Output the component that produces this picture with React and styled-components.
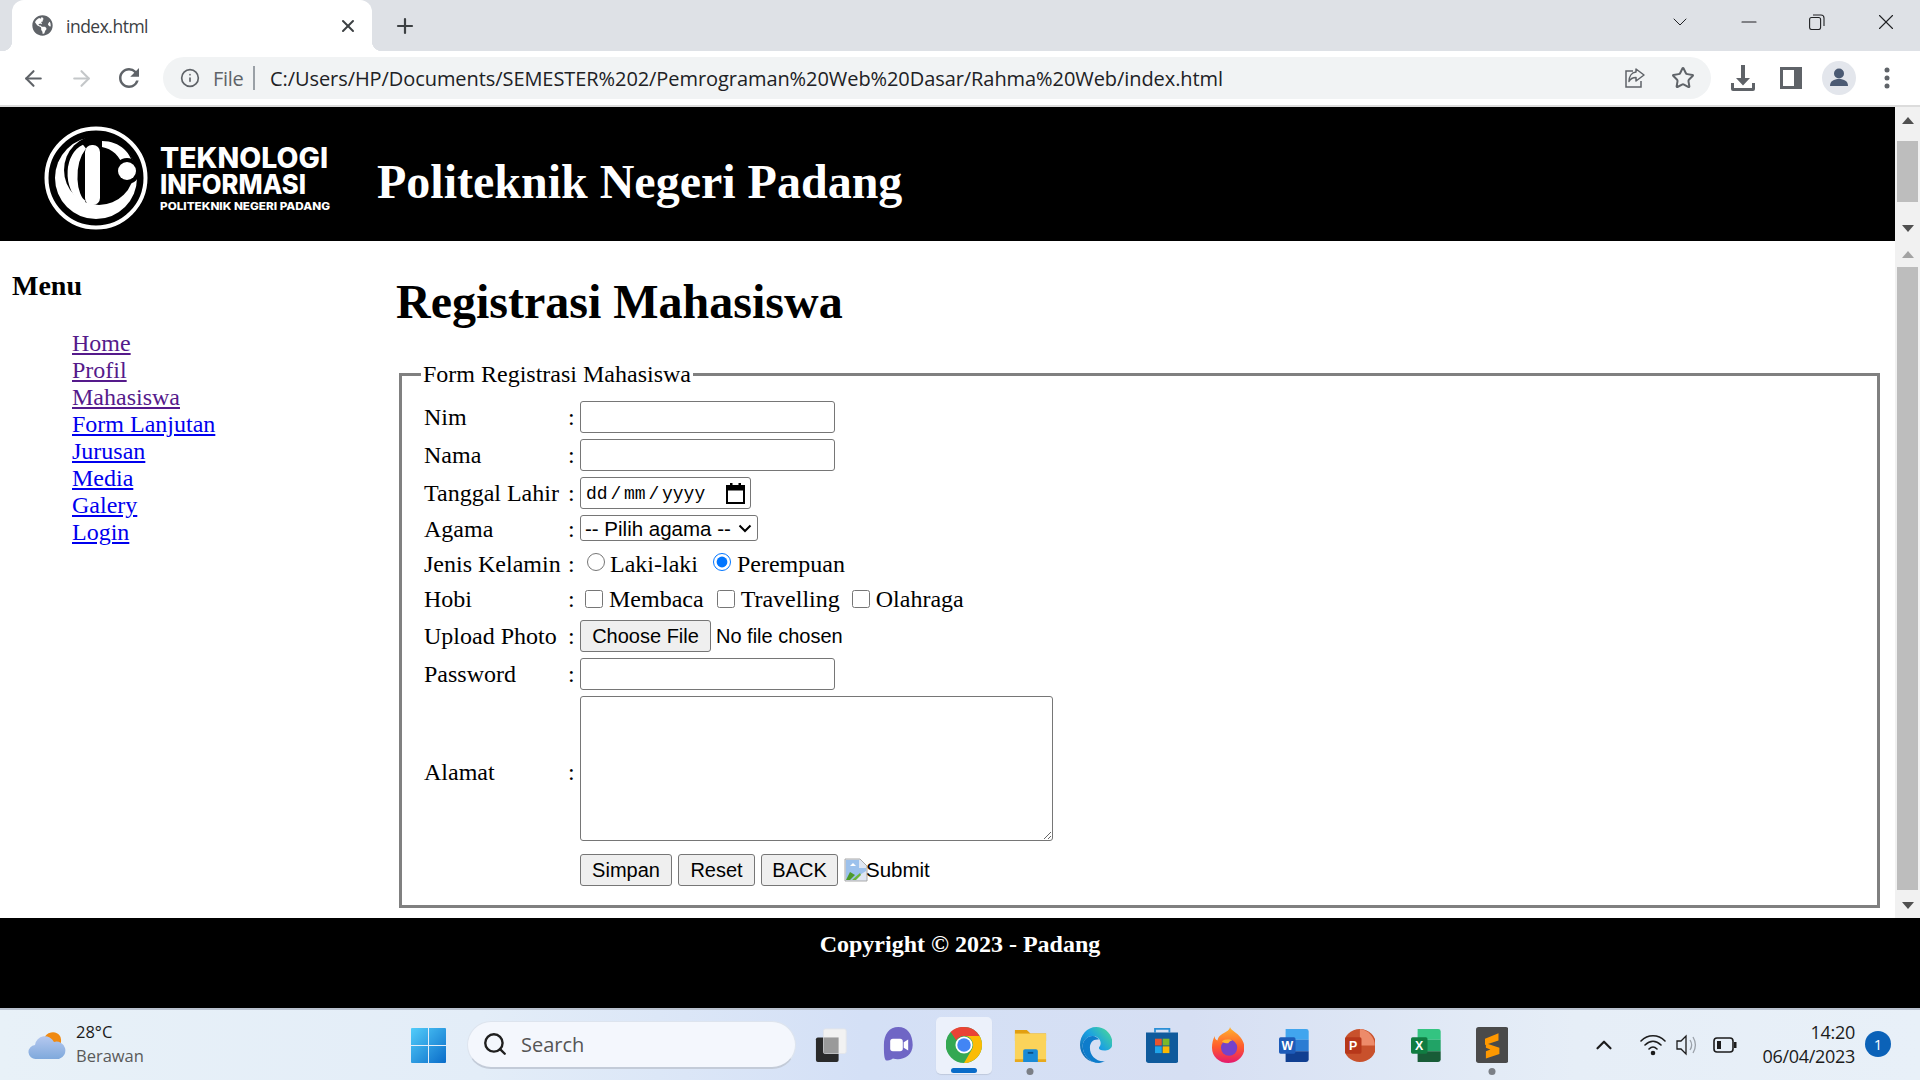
import React from 'react';
import styled, { createGlobalStyle } from 'styled-components';
import { ArrowLeft, ArrowRight, Info, Star, X, Plus, ChevronDown, ChevronUp, Minus, Search } from 'lucide-react';
import { FaGlobeAmericas } from 'react-icons/fa';
import { MdRefresh } from 'react-icons/md';

const Global = createGlobalStyle`
  html, body { margin: 0; padding: 0; width: 1920px; height: 1080px; overflow: hidden; background: #fff; }
  * { box-sizing: border-box; }
`;
const UI = `"Open Sans", "Noto Sans", sans-serif`;
const SERIF = `"Liberation Serif", "Times New Roman", serif`;
const SANS = `"Liberation Sans", Arial, sans-serif`;
const MONO = `"Liberation Mono", "Courier New", monospace`;
const CHEVRON = `url("data:image/svg+xml,%3Csvg xmlns='http://www.w3.org/2000/svg' width='14' height='9' viewBox='0 0 14 9'%3E%3Cpath d='M1.500 1.500L7 7l5.500-5.500' fill='none' stroke='%23000' stroke-width='2'/%3E%3C/svg%3E")`;

const Screen = styled.div`width:1920px;height:1080px;display:flex;flex-direction:column;overflow:hidden;font-family:${SERIF};`;
const TabStrip = styled.div`height:51px;background:#dee1e6;display:flex;align-items:center;padding-left:12px;flex:none;`;
const Tab = styled.div`
  position:relative;width:360px;height:51px;background:#fff;border-radius:12px 12px 0 0;display:flex;align-items:center;padding:0 14px 0 20px;color:#3c4043;
  font:17.5px ${UI};letter-spacing:-.5px;
  &::before,&::after{content:"";position:absolute;bottom:0;width:10px;height:10px;}
  &::before{left:-10px;background:radial-gradient(circle at 0 0,#dee1e6 10px,#fff 10.5px);}
  &::after{right:-10px;background:radial-gradient(circle at 100% 0,#dee1e6 10px,#fff 10.5px);}
`;
const TabTitle = styled.span`margin-left:13px;flex:1;`;
const NewTab = styled.div`margin-left:21px;display:flex;color:#3c4043;`;
const WindowControls = styled.div`margin-left:auto;display:flex;height:100%;`;
const WinBtn = styled.div`width:68.5px;display:flex;align-items:center;justify-content:center;padding-bottom:8px;color:#202124;`;
const Toolbar = styled.div`height:56px;background:#fff;border-bottom:2px solid #dcdcdc;display:flex;align-items:center;padding:0 9px;flex:none;`;
const ToolBtn = styled.div`width:48px;height:42px;display:flex;align-items:center;justify-content:center;color:${p=>p.$dim?'#c4c7c9':'#5f6368'};flex:none;`;
const Omnibox = styled.div`margin:0 8px 0 10px;width:1548px;height:42px;border-radius:21px;background:#f1f3f4;display:flex;align-items:center;padding:0 16px 0 17px;color:#5f6368;flex:none;`;
const Scheme = styled.span`font:20px ${UI};margin-left:13px;color:#5f6368;letter-spacing:-.3px;`;
const OmniSep = styled.span`width:1.5px;height:24px;background:#9aa0a6;margin:0 15px 0 10px;`;
const Url = styled.span`font:20px ${UI};color:#202124;letter-spacing:-.07px;white-space:nowrap;`;
const OmniEnd = styled.div`margin-left:auto;display:flex;gap:24px;align-items:center;`;

const Page = styled.div`flex:1;display:flex;flex-direction:column;min-height:0;`;
const HeaderFrame = styled.div`height:134px;display:flex;flex:none;`;
const Banner = styled.header`flex:1;background:#000;display:flex;align-items:center;color:#fff;`;
const LogoBox = styled.svg`width:340px;height:134px;flex:none;`;
const BannerTitle = styled.h1`margin:14px 0 0 37px;font:bold 48px ${SERIF};`;
const Scrollbar = styled.div`width:25px;flex:none;background:#f1f1f1;display:flex;flex-direction:column;align-items:center;`;
const Arrow = styled.div`
  height:26px;flex:none;display:flex;align-items:center;justify-content:center;
  &::after{content:"";border-left:6px solid transparent;border-right:6px solid transparent;
    ${p=>p.$down?'border-top':'border-bottom'}:7px solid ${p=>p.$dim?'#a3a3a3':'#505050'};}
`;
const ScrollTrack = styled.div`flex:1;width:100%;display:flex;flex-direction:column;padding:${p=>p.$pad};`;
const Thumb = styled.div`height:${p=>p.$h}px;margin:0 2px;background:${p=>p.$c||'#bdbdbd'};`;
const MiddleFrame = styled.div`height:677px;display:flex;flex:none;`;
const Sidebar = styled.nav`width:385px;flex:none;padding:29px 12px 0;`;
const MenuTitle = styled.h3`margin:0 0 28px;font:bold 28px ${SERIF};`;
const MenuList = styled.ul`margin:0;padding:0 0 0 60px;list-style:none;`;
const MenuItem = styled.li`font:24px/27px ${SERIF};`;
const MenuLink = styled.a`color:${p=>p.$visited?'#551a8b':'#0000ee'};text-decoration:underline;`;
const Content = styled.main`flex:1;padding:0 15px 0 11px;min-width:0;`;
const PageTitle = styled.h1`margin:33px 0 32px;font:bold 48px/55px ${SERIF};`;
const FormSet = styled.fieldset`margin:0 0 0 3px;border:3px solid #808080;padding:0 18px 19px 17px;min-width:0;`;
const FormLegend = styled.legend`font:24px/27px ${SERIF};padding:0 2px;margin-left:2px;`;
const Row = styled.div`display:grid;grid-template-columns:149px 12px 1fr;height:${p=>p.$h}px;margin-top:${p=>p.$mt??6}px;align-items:center;font:24px/27px ${SERIF};`;
const Label = styled.span`padding-left:5px;white-space:nowrap;`;
const Colon = styled.span``;
const Controls = styled.div`display:flex;align-items:center;align-self:${p=>p.$top?'start':'center'};`;
const TextInput = styled.input`width:255px;height:32px;border:1px solid #767676;border-radius:3px;background:#fff;padding:0 3px;`;
const DateBox = styled.div`width:171px;height:32px;border:1px solid #767676;border-radius:3px;display:flex;align-items:center;padding:0 5px 0 5px;font:18px ${MONO};color:#000;justify-content:space-between;`;
const DateText = styled.span`word-spacing:-8px;position:relative;top:1px;`;
const Select = styled.select`width:178px;height:26px;margin-top:-2px;border:1px solid #767676;border-radius:3px;appearance:none;background:#fff ${CHEVRON} no-repeat right 5px center;font:20.5px ${SANS};padding:0 0 0 4px;color:#000;`;
const Choice = styled.label`display:inline-flex;align-items:center;margin-right:${p=>p.$mr}px;`;
const Radio = styled.input`width:18px;height:18px;margin:${p=>p.$m};flex:none;position:relative;top:${p=>p.$top??-1}px;`;
const FileInput = styled.input`
  font:20px ${SANS};color:#000;width:400px;
  &::file-selector-button{font:20px ${SANS};width:131px;height:32px;border:1px solid #767676;border-radius:3px;background:#efefef;color:#000;margin-right:5px;padding:0;}
`;
const Area = styled.textarea`width:473px;height:145px;border:1px solid #767676;border-radius:3px;display:block;resize:both;`;
const Btn = styled.button`width:${p=>p.$w}px;height:32px;border:1px solid #767676;border-radius:3px;background:#efefef;font:20px ${SANS};color:#000;margin-right:6px;padding:0;`;
const BrokenImg = styled.span`display:inline-flex;align-items:center;font:20.500px ${SANS};`;
const BrokenAlt = styled.span`margin-left:-2px;`;

const FooterFrame = styled.footer`height:90px;background:#000;color:#fff;font:bold 24px/27px ${SERIF};text-align:center;padding-top:13px;flex:none;`;
const Taskbar = styled.div`height:72px;flex:none;display:flex;align-items:center;border-top:2px solid #b9c2cf;background:linear-gradient(90deg,#e8f1f8 0%,#e3edf8 25%,#d4e0f6 45%,#d6dff3 62%,#e6eef7 82%,#e8f0f8 100%);`;
const Weather = styled.div`width:395px;flex:none;display:flex;align-items:center;padding-left:28px;`;
const WeatherText = styled.div`margin-left:10px;font:16.5px/24px ${UI};color:#1b1b1b;margin-top:-2px;`;
const WeatherSub = styled.div`color:#5a5a5a;`;
const WinSlot = styled.div`width:66px;height:57px;flex:none;display:flex;align-items:center;justify-content:center;`;
const AppSlot = styled.div`
  width:56px;height:57px;flex:none;margin-left:${p=>p.$first?8:10}px;display:flex;align-items:center;justify-content:center;position:relative;border-radius:5px;
  ${p=>p.$active?'background:rgba(255,255,255,.55);box-shadow:0 1px 1px rgba(0,0,0,.1);':''}
  & > svg{height:${p=>p.$ih||35}px;width:auto;}
`;
const SearchBox = styled.div`width:329px;height:48px;flex:none;margin-left:6px;margin-top:-1px;border-radius:24px;background:#f4f7fd;border:1px solid #dde4ee;border-bottom:2px solid #c3cbd8;display:flex;align-items:center;padding-left:14px;font:20px ${UI};color:#555;`;
const SearchLabel = styled.span`margin-left:13px;`;
const RunDot = styled.span`position:absolute;bottom:${p=>p.$w?1:-1}px;left:50%;transform:translateX(-50%);width:${p=>p.$w||7}px;height:${p=>p.$w?5:7}px;border-radius:4px;background:${p=>p.$c||'#7b7f86'};`;
const Tray = styled.div`margin-left:auto;padding-right:29px;display:flex;align-items:center;`;
const TrayIcon = styled.div`width:34px;display:flex;justify-content:center;margin:${p=>p.$m||0};color:#1c1c1c;`;
const Clock = styled.div`width:95px;text-align:right;font:18px/24px ${UI};color:#1b1b1b;margin-right:10px;letter-spacing:-.3px;margin-top:-2px;`;
const Badge = styled.div`width:26px;height:26px;border-radius:50%;background:#0b62b8;color:#fff;font:15px ${UI};display:flex;align-items:center;justify-content:center;margin-top:-3px;`;

const Logo = () => (
  <LogoBox viewBox="0 0 340 134">
    <circle cx="96" cy="71" r="49.5" fill="none" stroke="#fff" strokeWidth="4"/>
    <circle cx="96" cy="71" r="41" fill="#fff"/>
    <circle cx="99" cy="63" r="35" fill="#000"/>
    <path d="M84 40C68 47 63 78 84 96C74 90 70 58 84 40Z" fill="#fff" stroke="#fff" strokeWidth="5"/>
    <rect x="85" y="38" width="15" height="60" rx="7" fill="#fff"/>
    <path d="M102 34C120 34 132 46 134 62L124 62C120 48 112 42 102 40Z" fill="#fff"/>
    <circle cx="127" cy="64" r="13" fill="#000"/>
    <circle cx="127" cy="64" r="9" fill="#fff"/>
    <g fill="#fff" fontFamily={`Inter, ${SANS}`} fontWeight="800">
      <text x="160" y="61" fontSize="28" textLength="168" lengthAdjust="spacingAndGlyphs">TEKNOLOGI</text>
      <text x="160" y="87" fontSize="27" textLength="146" lengthAdjust="spacingAndGlyphs">INFORMASI</text>
      <text x="160" y="103" fontSize="10.5" textLength="170" lengthAdjust="spacingAndGlyphs">POLITEKNIK NEGERI PADANG</text>
    </g>
  </LogoBox>
);

const Share = () => (
  <svg width="24" height="24" viewBox="0 0 24 24" fill="none" stroke="#5f6368" strokeWidth="1.5">
    <path d="M10 5H3v16h15v-6"/><path d="M13 3l8 6-8 6v-3.5c-4 0-6 2-7 4 0-5 2.500-9 7-9.500z" strokeLinejoin="round"/>
  </svg>
);
const Download = () => (
  <svg width="26" height="28" viewBox="0 0 26 28" fill="#5f6368">
    <path d="M11 1h4v13h5l-7 7.500L6 14h5z"/><path d="M1 19h3v5h18v-5h3v6a2 2 0 0 1-2 2H3a2 2 0 0 1-2-2z"/>
  </svg>
);
const SidePanel = () => (
  <svg width="22" height="22" viewBox="0 0 22 22"><rect width="22" height="22" fill="#5f6368"/><rect x="3" y="3" width="11" height="16" fill="#fff"/></svg>
);
const Avatar = () => (
  <svg width="34" height="34" viewBox="0 0 34 34">
    <circle cx="17" cy="17" r="17" fill="#e3e6ec"/><circle cx="17" cy="12.500" r="5" fill="#4b5a73"/>
    <path d="M8 25c0-5 4-7 9-7s9 2 9 7z" fill="#4b5a73"/>
  </svg>
);
const Dots = () => (
  <svg width="6" height="22" viewBox="0 0 6 22" fill="#5f6368"><circle cx="3" cy="3" r="2.500"/><circle cx="3" cy="11" r="2.500"/><circle cx="3" cy="19" r="2.500"/></svg>
);
const Restore = () => (
  <svg width="16" height="16" viewBox="0 0 16 16" fill="none" stroke="#202124" strokeWidth="1.100"><rect x=".6" y="3.500" width="11" height="12" rx="2"/><path d="M4 1h8a3 3 0 0 1 3 3v8"/></svg>
);
const CalendarIcon = () => (
  <svg width="19" height="21" viewBox="0 0 19 21"><path d="M1 3h17v17H1z" fill="none" stroke="#000" strokeWidth="2"/><rect x="1" y="3" width="17" height="4.500"/><rect x="4" y="0" width="2.500" height="4"/><rect x="12.500" y="0" width="2.500" height="4"/></svg>
);
const BrokenIcon = () => (
  <svg width="24" height="24" viewBox="0 0 24 24">
    <path d="M1 1h15l7 7v15H1z" fill="#dfe6f2" stroke="#a9a9a9"/><path d="M2 2h13v8h7v3L8 22H2z" fill="#9cc1ec"/>
    <path d="M2 22l4-8 5 3-5 5z" fill="#4c9a2a"/><path d="M8 22l8-7 1 2-5 5z" fill="#6bb53a"/><path d="M6 8l3-3 3 3z" fill="#fff"/>
  </svg>
);

const WeatherIcon = () => (
  <svg width="38" height="32" viewBox="0 0 38 32">
    <defs><linearGradient id="wc" x1="0" y1="0" x2="0" y2="1"><stop offset="0" stopColor="#b5c8ef"/><stop offset="1" stopColor="#7fa9dc"/></linearGradient></defs>
    <path d="M16 10a9 9 0 0 1 16-3c2 4 1 9-1 13H20z" fill="#f08a12"/>
    <path d="M8 30a7 7 0 0 1-1-14 10 10 0 0 1 19-3 8.500 8.500 0 0 1 5 17z" fill="url(#wc)"/>
  </svg>
);
const WinLogo = () => (
  <svg width="35" height="35" viewBox="0 0 35 35">
    <defs><linearGradient id="wl" x1="0" y1="0" x2="1" y2="1"><stop offset="0" stopColor="#52cdfa"/><stop offset="1" stopColor="#0a6cc9"/></linearGradient></defs>
    <path d="M1 0h16v17H0V1a1 1 0 0 1 1-1zM18 0h16a1 1 0 0 1 1 1v16H18zM0 18h17v17H1a1 1 0 0 1-1-1zM18 18h17v16a1 1 0 0 1-1 1H18z" fill="url(#wl)"/>
  </svg>
);
const TaskView = () => (
  <svg viewBox="0 0 36 36">
    <rect x="1" y="10" width="24" height="26" rx="2" fill="#2a2a2a"/><rect x="9" y="1" width="24" height="26" rx="2" fill="#f2f2f2" stroke="#e3e6ea"/><rect x="9" y="10" width="16" height="17" fill="#9a9a9a"/>
  </svg>
);
const ChatIcon = () => (
  <svg viewBox="0 0 34 40">
    <path d="M17 0C7 0 1 8 1 20c0 7 0 14 2 17 4 1 6-1 8-2 9 3 22-2 22-15C33 8 27 0 17 0z" fill="#6f66c5"/>
    <rect x="8" y="13" width="14" height="14" rx="3" fill="#fff"/><path d="M23 17l5-3v12l-5-3z" fill="#fff"/>
  </svg>
);
const ChromeIcon = () => (
  <svg viewBox="0 0 40 40">
    <circle cx="20" cy="20" r="20" fill="#34a853"/>
    <path d="M20 0a20 20 0 0 1 17.300 10H20a10 10 0 0 0-8.700 5L5 5.500A20 20 0 0 1 20 0z" fill="#ea4335"/>
    <path d="M37.300 10A20 20 0 0 1 20 40l8.700-15A10 10 0 0 0 20 10z" fill="#fbbc04"/>
    <path d="M5 5.500A20 20 0 0 0 3 30l8.300-15z" fill="#34a853"/>
    <circle cx="20" cy="20" r="9.500" fill="#fff"/><circle cx="20" cy="20" r="7.500" fill="#4285f4"/>
  </svg>
);
const FilesIcon = () => (
  <svg viewBox="0 0 36 36">
    <path d="M1 1h13l4 4h17v8H1z" fill="#e29f10"/><rect x="1" y="5" width="34" height="31" fill="#fbd35a"/>
    <rect x="1" y="33" width="34" height="3" fill="#e8a91c"/><path d="M10 24a2 2 0 0 1 2-2h12a2 2 0 0 1 2 2v12H10z" fill="#1a8ad6"/><rect x="15" y="25" width="6" height="2" fill="#0b4f86"/>
  </svg>
);
const EdgeIcon = () => (
  <svg viewBox="0 0 36 40">
    <defs><linearGradient id="eg" x1="0" y1="1" x2="1" y2="0"><stop offset="0" stopColor="#0c59a4"/><stop offset=".55" stopColor="#1ba1e2"/><stop offset="1" stopColor="#4fe08e"/></linearGradient></defs>
    <path d="M18 0c10 0 18 8 18 18 0 6-4 8-9 8-4 0-6-1-6-3 0-1 2-2 2-5 0-4-4-8-9-8C8 10 3 15 3 21c0 10 8 19 18 19C9 40 0 31 0 20 0 9 8 0 18 0z" fill="url(#eg)"/>
    <path d="M3 21c0-6 5-11 11-11 3 0 6 2 7 4-6-1-10 3-10 9 0 8 6 15 15 15 1 0 2 0 3-1-3 2-6 3-8 3C11 40 3 31 3 21z" fill="#0e7ccb"/>
  </svg>
);
const StoreIcon = () => (
  <svg viewBox="0 0 36 40">
    <path d="M10 6V2h16v4" fill="none" stroke="#2a8fd6" strokeWidth="2"/><path d="M0 6h36v31a3 3 0 0 1-3 3H3a3 3 0 0 1-3-3z" fill="#0f5a9c"/>
    <rect x="10" y="13" width="7.500" height="7.500" fill="#e8542e"/><rect x="18.500" y="13" width="7.500" height="7.500" fill="#7ab929"/>
    <rect x="10" y="21.500" width="7.500" height="7.500" fill="#1fa4ea"/><rect x="18.500" y="21.500" width="7.500" height="7.500" fill="#fbb901"/>
  </svg>
);
const FirefoxIcon = () => (
  <svg viewBox="0 0 36 40">
    <defs><linearGradient id="ff" x1="0" y1="0" x2="0" y2="1"><stop offset="0" stopColor="#ffb52e"/><stop offset=".55" stopColor="#ff5a2c"/><stop offset="1" stopColor="#e4196f"/></linearGradient></defs>
    <path d="M20 0c1 4 8 6 12 12 3 4 4 8 4 11 0 10-8 17-18 17S0 33 0 23c0-5 1-9 3-13 0 3 1 4 3 5 1-6 7-8 10-10 2-1 4-3 4-5z" fill="url(#ff)"/>
    <circle cx="19" cy="23" r="9" fill="#7542c9"/><path d="M11 16c3-3 9-3 12-1-3 0-4 2-5 3-3 0-5 0-7-2z" fill="#ffb52e"/>
  </svg>
);
const OfficeIcon = ({ letter, tile, shades }) => (
  <svg viewBox="0 0 36 40">
    <path d="M8 0h25a3 3 0 0 1 3 3v10H8z" fill={shades[0]}/><rect x="8" y="13" width="28" height="14" fill={shades[1]}/>
    <path d="M8 27h28v10a3 3 0 0 1-3 3H8z" fill={shades[2]}/>
    <rect x="0" y="10" width="20" height="20" rx="2" fill={tile}/>
    <text x="10" y="25" textAnchor="middle" fontSize="15" fontWeight="bold" fill="#fff" fontFamily={SANS}>{letter}</text>
  </svg>
);
const PptIcon = () => (
  <svg viewBox="0 0 36 40">
    <circle cx="18" cy="20" r="20" fill="#c8512c"/><path d="M18 0a20 20 0 0 1 18 20H18z" fill="#ed8b6a"/>
    <rect x="0" y="10" width="20" height="20" rx="2" fill="#b7371a"/>
    <text x="10" y="25" textAnchor="middle" fontSize="15" fontWeight="bold" fill="#fff" fontFamily={SANS}>P</text>
  </svg>
);
const SublimeIcon = () => (
  <svg viewBox="0 0 36 40">
    <rect width="36" height="40" rx="3" fill="#4a4a4a"/>
    <path d="M25 7v8L10 20v-7zM11 18l15 5v7l-15 5v-8l5-2-5-2z" fill="#ff9800"/>
  </svg>
);
const Wifi = () => (
  <svg width="26" height="24" viewBox="0 0 26 24" fill="none" stroke="#1c1c1c" strokeWidth="1.600" strokeLinecap="round">
    <path d="M1 8c7-7 17-7 24 0M5 12c5-5 11-5 16 0M9 16c2.500-2.500 5.500-2.500 8 0"/><circle cx="13" cy="20" r="1.500" fill="#1c1c1c"/>
  </svg>
);
const Volume = () => (
  <svg width="24" height="24" viewBox="0 0 24 24" fill="none" stroke="#1c1c1c" strokeWidth="1.300">
    <path d="M2 8h4l5-5v18l-5-5H2z"/><path d="M15 7c2 3 2 7 0 10M18 4c3 5 3 11 0 16" stroke="#9aa0a8"/>
  </svg>
);
const Battery = () => (
  <svg width="24" height="16" viewBox="0 0 24 16"><rect x="1" y="1" width="19" height="14" rx="3" fill="none" stroke="#1c1c1c" strokeWidth="1.600"/><rect x="4" y="4" width="4" height="8" fill="#1c1c1c"/><rect x="21" y="5" width="2.500" height="6" fill="#1c1c1c"/></svg>
);

const menu = [['Home',1],['Profil',1],['Mahasiswa',1],['Form Lanjutan'],['Jurusan'],['Media'],['Galery'],['Login']];
const apps = [
  { key:'task', icon:<TaskView/>, h:34 },
  { key:'chat', icon:<ChatIcon/>, h:36 },
  { key:'chrome', icon:<ChromeIcon/>, active:true, h:36 },
  { key:'files', icon:<FilesIcon/>, dot:true, h:33 },
  { key:'edge', icon:<EdgeIcon/>, h:36 },
  { key:'store', icon:<StoreIcon/>, h:36 },
  { key:'fox', icon:<FirefoxIcon/>, h:36 },
  { key:'word', icon:<OfficeIcon letter="W" tile="#1d5bb8" shades={['#41a5ee','#2b7cd3','#103f91']}/>, h:33 },
  { key:'ppt', icon:<PptIcon/>, h:33 },
  { key:'xls', icon:<OfficeIcon letter="X" tile="#107c41" shades={['#33c481','#21a366','#185c37']}/>, h:33 },
  { key:'sub', icon:<SublimeIcon/>, dot:true, h:36 },
];

export default function App() {
  return (
    <Screen>
      <Global/>
      <TabStrip>
        <Tab>
          <FaGlobeAmericas size={21} color="#5f6368"/>
          <TabTitle>index.html</TabTitle>
          <X size={20} strokeWidth={2.4} color="#3c4043"/>
        </Tab>
        <NewTab><Plus size={24} strokeWidth={2.2}/></NewTab>
        <WindowControls>
          <WinBtn><ChevronDown size={24} strokeWidth={1}/></WinBtn>
          <WinBtn><Minus size={24} strokeWidth={1.1}/></WinBtn>
          <WinBtn><Restore/></WinBtn>
          <WinBtn><X size={26} strokeWidth={1}/></WinBtn>
        </WindowControls>
      </TabStrip>
      <Toolbar>
        <ToolBtn><ArrowLeft size={25} strokeWidth={2}/></ToolBtn>
        <ToolBtn $dim><ArrowRight size={25} strokeWidth={2}/></ToolBtn>
        <ToolBtn><MdRefresh size={30}/></ToolBtn>
        <Omnibox>
          <Info size={20} strokeWidth={2}/>
          <Scheme>File</Scheme>
          <OmniSep/>
          <Url>C:/Users/HP/Documents/SEMESTER%202/Pemrograman%20Web%20Dasar/Rahma%20Web/index.html</Url>
          <OmniEnd><Share/><Star size={24} strokeWidth={2}/></OmniEnd>
        </Omnibox>
        <ToolBtn><Download/></ToolBtn>
        <ToolBtn><SidePanel/></ToolBtn>
        <ToolBtn><Avatar/></ToolBtn>
        <ToolBtn><Dots/></ToolBtn>
      </Toolbar>
      <Page>
        <HeaderFrame>
          <Banner>
            <Logo/>
            <BannerTitle>Politeknik Negeri Padang</BannerTitle>
          </Banner>
          <Scrollbar>
            <Arrow/>
            <ScrollTrack $pad="8px 0 0"><Thumb $h={61}/></ScrollTrack>
            <Arrow $down/>
          </Scrollbar>
        </HeaderFrame>
        <MiddleFrame>
          <Sidebar>
            <MenuTitle>Menu</MenuTitle>
            <MenuList>
              {menu.map(([t,v]) => <MenuItem key={t}><MenuLink href="#" $visited={v}>{t}</MenuLink></MenuItem>)}
            </MenuList>
          </Sidebar>
          <Content>
            <PageTitle>Registrasi Mahasiswa</PageTitle>
            <FormSet>
              <FormLegend>Form Registrasi Mahasiswa</FormLegend>
              <Row $h={32} $mt={13}><Label>Nim</Label><Colon>:</Colon><Controls><TextInput/></Controls></Row>
              <Row $h={32}><Label>Nama</Label><Colon>:</Colon><Controls><TextInput/></Controls></Row>
              <Row $h={32}><Label>Tanggal Lahir</Label><Colon>:</Colon><Controls><DateBox><DateText>dd / mm / yyyy</DateText><CalendarIcon/></DateBox></Controls></Row>
              <Row $h={28}><Label>Agama</Label><Colon>:</Colon><Controls><Select><option>-- Pilih agama --</option></Select></Controls></Row>
              <Row $h={30}><Label>Jenis Kelamin</Label><Colon>:</Colon><Controls>
                <Choice $mr={15}><Radio type="radio" name="jk" $top={-2} $m="0 5px 0 7px"/>Laki-laki</Choice>
                <Choice $mr={0}><Radio type="radio" name="jk" defaultChecked $top={-2} $m="0 6px 0 0"/>Perempuan</Choice>
              </Controls></Row>
              <Row $h={29}><Label>Hobi</Label><Colon>:</Colon><Controls>
                <Choice $mr={13}><Radio type="checkbox" $m="0 6px 0 5px"/>Membaca</Choice>
                <Choice $mr={12}><Radio type="checkbox" $m="0 6px 0 0"/>Travelling</Choice>
                <Choice $mr={0}><Radio type="checkbox" $m="0 6px 0 0"/>Olahraga</Choice>
              </Controls></Row>
              <Row $h={32}><Label>Upload Photo</Label><Colon>:</Colon><Controls><FileInput type="file"/></Controls></Row>
              <Row $h={32}><Label>Password</Label><Colon>:</Colon><Controls><TextInput type="password"/></Controls></Row>
              <Row $h={152}><Label>Alamat</Label><Colon>:</Colon><Controls $top><Area/></Controls></Row>
              <Row $h={32}><span/><span/><Controls>
                <Btn $w={92}>Simpan</Btn><Btn $w={77}>Reset</Btn><Btn $w={77}>BACK</Btn>
                <BrokenImg><BrokenIcon/><BrokenAlt>Submit</BrokenAlt></BrokenImg>
              </Controls></Row>
            </FormSet>
          </Content>
          <Scrollbar>
            <Arrow $dim/>
            <ScrollTrack $pad="0"><Thumb $h={623}/></ScrollTrack>
            <Arrow $down/>
          </Scrollbar>
        </MiddleFrame>
        <FooterFrame>Copyright © 2023 - Padang</FooterFrame>
      </Page>
      <Taskbar>
        <Weather><WeatherIcon/><WeatherText>28°C<WeatherSub>Berawan</WeatherSub></WeatherText></Weather>
        <WinSlot><WinLogo/></WinSlot>
        <SearchBox><Search size={26} strokeWidth={2.2} color="#1f1f1f"/><SearchLabel>Search</SearchLabel></SearchBox>
        {apps.map((a,i) => (
          <AppSlot key={a.key} $active={a.active} $ih={a.h} $first={i===0}>
            {a.icon}
            {a.active && <RunDot $w={26} $c="#0a6cc9"/>}
            {a.dot && <RunDot/>}
          </AppSlot>
        ))}
        <Tray>
          <TrayIcon $m="0 15px 0 0"><ChevronUp size={26} strokeWidth={2}/></TrayIcon>
          <TrayIcon><Wifi/></TrayIcon>
          <TrayIcon><Volume/></TrayIcon>
          <TrayIcon $m="0 18px 0 4px"><Battery/></TrayIcon>
          <Clock>14:20<br/>06/04/2023</Clock>
          <Badge>1</Badge>
        </Tray>
      </Taskbar>
    </Screen>
  );
}
